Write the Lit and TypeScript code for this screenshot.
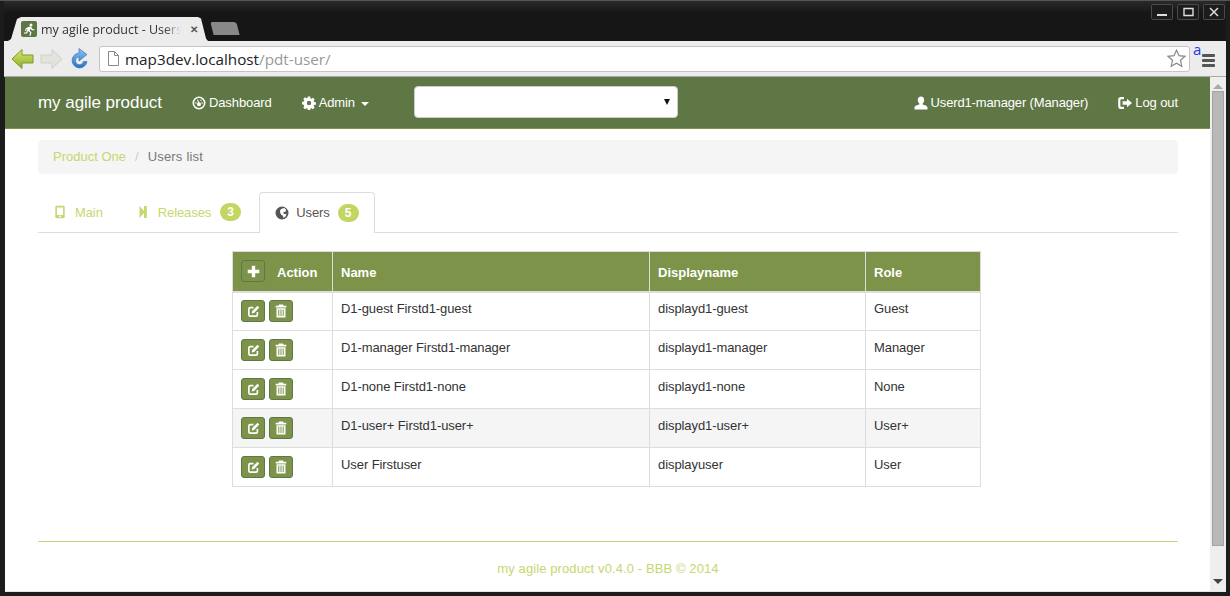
import { LitElement, html, css, svg } from "lit";
import { customElement } from "lit/decorators.js";

const users = [
  { name: "D1-guest Firstd1-guest", display: "displayd1-guest", role: "Guest" },
  { name: "D1-manager Firstd1-manager", display: "displayd1-manager", role: "Manager" },
  { name: "D1-none Firstd1-none", display: "displayd1-none", role: "None" },
  { name: "D1-user+ Firstd1-user+", display: "displayd1-user+", role: "User+" },
  { name: "User Firstuser", display: "displayuser", role: "User" },
];

// small glyph helper, every icon lives in a 14x14 box
const icon = (body: unknown, size = 14) => html`<svg
  class="ico"
  width=${size}
  height=${size}
  viewBox="0 0 14 14"
  fill="currentColor"
  >${body}</svg
>`;

const icDashboard = svg`<circle cx="7" cy="7" r="5.7" fill="none" stroke="currentColor" stroke-width="1.600"/><circle cx="7" cy="8.300" r="2"/><path d="M6.400 8 5 3.800l1-.3 1.600 4.200z"/><circle cx="3.900" cy="7" r=".8"/><circle cx="10.100" cy="7" r=".8"/><circle cx="9" cy="4.300" r=".7"/>`;
const icCog = svg`<path fill-rule="evenodd" d="M5.800.6h2.400l.3 1.800 1 .4 1.500-1 1.700 1.700-1 1.500.4 1 1.800.3v2.400l-1.800.3-.4 1 1 1.500-1.700 1.700-1.500-1-1 .4-.3 1.800H5.800l-.3-1.800-1-.4-1.500 1-1.700-1.700 1-1.500-.4-1L.1 8.200V5.800l1.800-.3.4-1-1-1.500L3 1.300l1.500 1 1-.4zM7 4.800a2.200 2.200 0 1 0 0 4.400 2.200 2.200 0 0 0 0-4.400z"/>`;
const icUser = svg`<path d="M7 .5c2 0 3.200 1.500 3.200 3.500 0 1.400-.6 2.700-1.500 3.400v1.100c1.900.5 4.800 1.200 4.800 3.200v1.800H.5v-1.800c0-2 2.900-2.700 4.800-3.200V7.400C4.400 6.700 3.800 5.400 3.800 4 3.800 2 5 .5 7 .5z"/>`;
const icLogout = svg`<path d="M6 1H3A2.800 2.800 0 0 0 .2 3.800v6.400A2.800 2.800 0 0 0 3 13h3v-2.200H3.200a.8.800 0 0 1-.8-.8V4c0-.4.400-.8.800-.8H6z"/><path d="M9 2.800 14 7l-5 4.200V8.800H4.600V5.200H9z"/>`;
const icPhone = svg`<path fill-rule="evenodd" d="M3.500.8h7c.7 0 1.200.5 1.200 1.200v10c0 .7-.5 1.200-1.200 1.200h-7c-.7 0-1.200-.5-1.200-1.200V2c0-.7.5-1.200 1.200-1.200zm.4 1.600V10h6.200V2.400zM7 10.600a.9.900 0 1 0 0 1.800.9.900 0 0 0 0-1.800z"/>`;
const icStepFwd = svg`<path d="M3.500 1v12l4.500-5v5h2.800V1H8v5z"/>`;
const icGlobe = svg`<path fill-rule="evenodd" d="M7 .5a6.500 6.500 0 1 0 0 13 6.500 6.500 0 0 0 0-13zM6.500 2.800 9.200 2l1.800 1.500-.4 2.200-1.900.2-.5 1.300 1.900 1 1.500-.5-.9 2.600-2.100 1.700-.7-2.300-1.600-1-1.100-1.900L5 4.500z"/>`;
const icPlus = svg`<path d="M5.200.8h3.600v4.400h4.400v3.600H8.800v4.400H5.200V8.800H.8V5.200h4.400z"/>`;
const icEdit = svg`<path d="M7 2.800H3.500a1.500 1.500 0 0 0-1.500 1.500v6.200A1.500 1.500 0 0 0 3.500 12h6.200a1.500 1.500 0 0 0 1.500-1.500V7.500" fill="none" stroke="currentColor" stroke-width="1.800"/><path d="M11.300.9 13.200 2.800 7.700 8.500 5 9.100l.6-2.700z"/>`;
const icTrash = svg`<path fill-rule="evenodd" d="M5 .6h4l.6 1.200h2.700v1.600H1.700V1.800h2.700zM2.500 4.200h9v9.200h-9zM4.300 5.500v6.600h1V5.500zm2.200 0v6.600h1V5.500zm2.200 0v6.600h1V5.500z"/>`;

@customElement("app-root")
export class AppRoot extends LitElement {
  static override styles = css`
    :host {
      display: block;
      width: 1230px;
      height: 596px;
      overflow: hidden;
      background: #1a1a1a;
      font-family: "Liberation Sans", Arial, sans-serif;
      font-size: 13px;
      color: #333;
    }
    .frame {
      display: flex;
      flex-direction: column;
      height: 596px;
      box-sizing: border-box;
      padding: 0 4px 4px 4px;
      background: #1c1c1c;
      border-top: 1px solid #555;
    }

    /* title strip */
    .strip {
      height: 40px;
      flex: none;
      display: flex;
      align-items: flex-end;
      background: linear-gradient(#2a2a2a, #161616 12px);
      position: relative;
    }
    .tab {
      width: 200px;
      height: 24px;
      margin-left: 4px;
      box-sizing: border-box;
      background: #ececec;
      clip-path: polygon(0 100%, 3px 92%, 9px 8%, 13px 0, 190px 0, 193px 6%, 198px 90%, 200px 100%);
      display: flex;
      align-items: center;
      padding: 0 0 0 13px;
      gap: 4px;
      font-family: "Open Sans", sans-serif;
      font-size: 12.5px;
      color: #333;
      overflow: hidden;
    }
    .favicon {
      width: 16px;
      height: 16px;
      flex: none;
      background: #5f7745;
      border-radius: 2px;
      color: #fff;
      display: flex;
      align-items: center;
      justify-content: center;
    }
    .tab-title {
      width: 140px;
      flex: none;
      white-space: nowrap;
      overflow: hidden;
      mask-image: linear-gradient(to right, #000 88%, transparent);
    }
    .tab-x {
      font-size: 10px;
      font-weight: 700;
      color: #555;
      margin-left: 5px;
    }
    .new-tab {
      width: 26px;
      height: 13px;
      margin: 0 0 6px 4px;
      background: #888;
      border-radius: 2px 3px 0 0;
      transform: skewX(14deg);
    }
    .win-btns {
      position: absolute;
      right: 1px;
      top: 3px;
      display: flex;
      gap: 4px;
    }
    .win-btn {
      width: 22px;
      height: 16px;
      box-sizing: border-box;
      border: 1px solid #4a4a4a;
      border-radius: 2px;
      background: #1c1c1c;
      color: #ddd;
      display: flex;
      align-items: center;
      justify-content: center;
    }

    /* toolbar */
    .toolbar {
      height: 36px;
      flex: none;
      box-sizing: border-box;
      background: #ececec;
      border-bottom: 1px solid #aaa;
      display: flex;
      align-items: center;
      padding: 0 0 0 7px;
      position: relative;
    }
    .nav-ico {
      display: flex;
      align-items: center;
    }
    .nav-ico .fwd {
      margin-left: 5px;
    }
    .nav-ico .reload {
      margin-left: 5px;
    }
    .omni {
      margin-left: 9px;
      width: 1091px;
      height: 26px;
      box-sizing: border-box;
      background: #fff;
      border: 1px solid #c4c4c4;
      border-radius: 3px;
      display: flex;
      align-items: center;
      padding: 0 3px 0 7px;
      font-family: "Open Sans", sans-serif;
      font-size: 15.25px;
      color: #222;
    }
    .omni .doc {
      margin-right: 5px;
      display: flex;
    }
    .omni .dim {
      color: #999;
    }
    .omni .star {
      margin-left: auto;
      display: flex;
    }
    .ext {
      position: absolute;
      left: 1189px;
      top: 0;
      color: #1a3cf0;
      font-family: "Open Sans", sans-serif;
      font-size: 15px;
      line-height: 16px;
    }
    .menu {
      width: 13px;
      margin-left: 12px;
      margin-top: 4px;
      display: flex;
      flex-direction: column;
      gap: 2px;
    }
    .menu i {
      display: block;
      height: 3px;
      background: #555;
      border-radius: 1px;
    }

    /* page plus scrollbar */
    .view {
      flex: 1;
      min-height: 0;
      display: flex;
      margin-left: 1px;
      border-bottom: 1px solid #e4e4e4;
    }
    .page {
      flex: 1;
      min-width: 0;
      background: #fff;
    }
    .scroll {
      width: 16px;
      flex: none;
      background: #eee;
      display: flex;
      flex-direction: column;
      align-items: center;
    }
    .scroll .up,
    .scroll .down {
      width: 0;
      height: 0;
      border-left: 5px solid transparent;
      border-right: 5px solid transparent;
    }
    .scroll .up {
      margin-top: 7px;
      border-bottom: 5px solid #aaa;
    }
    .scroll .thumb {
      width: 10px;
      height: 453px;
      margin-top: 2px;
      background: #b8b8b8;
      border: 1px solid #a4a4a4;
    }
    .scroll .down {
      margin-top: auto;
      margin-bottom: 7px;
      border-top: 5px solid #444;
    }

    .navbar {
      height: 52px;
      box-sizing: border-box;
      background: #5f7745;
      border-bottom: 1px solid #7d9349;
      color: #fff;
      display: flex;
      align-items: center;
      padding: 0 32px 0 33px;
      letter-spacing: -0.1px;
    }
    .brand {
      font-size: 17px;
      margin-right: 30px;
      letter-spacing: -0.05px;
    }
    .nav-link {
      display: flex;
      align-items: center;
      gap: 3px;
      margin-right: 30px;
    }
    .nav-link.who {
      letter-spacing: -0.14px;
    }
    .ico {
      flex: none;
      display: block;
    }
    .caret {
      width: 0;
      height: 0;
      margin-left: 3px;
      margin-top: 2px;
      border-left: 4px solid transparent;
      border-right: 4px solid transparent;
      border-top: 4px solid #fff;
    }
    .picker {
      width: 264px;
      height: 32px;
      box-sizing: border-box;
      margin: 0 0 2px 15px;
      background: #fff;
      border: 1px solid #ccc;
      border-radius: 4px;
      display: flex;
      align-items: center;
      justify-content: flex-end;
      padding-right: 7px;
    }
    .picker::after {
      content: "";
      border-left: 3px solid transparent;
      border-right: 3px solid transparent;
      border-top: 6px solid #111;
    }
    .spacer {
      flex: 1;
    }
    .nav-link.last {
      margin-right: 0;
    }

    .content {
      padding: 11px 32px 0 33px;
    }
    .crumbs {
      height: 34px;
      box-sizing: border-box;
      background: #f5f5f5;
      border-radius: 4px;
      padding: 0 15px 2px;
      display: flex;
      align-items: center;
      color: #777;
    }
    .crumbs .lnk {
      color: #c4d870;
    }
    .crumbs .sep {
      color: #ccc;
      margin: 0 9px;
    }
    .crumbs .cur {
      letter-spacing: 0.2px;
    }
    .tabs {
      display: flex;
      height: 41px;
      margin-top: 18px;
      border-bottom: 1px solid #ddd;
      box-sizing: border-box;
    }
    .tabs .t {
      display: flex;
      align-items: center;
      gap: 6px;
      padding: 0 15px;
      color: #c4d870;
      height: 40px;
      box-sizing: border-box;
      margin-right: 3px;
      letter-spacing: -0.1px;
    }
    .tabs .t.active {
      height: 41px;
      padding-bottom: 1px;
      color: #555;
      background: #fff;
      border: 1px solid #ddd;
      border-bottom: none;
      border-radius: 4px 4px 0 0;
    }
    .tabs .t .label {
      margin-left: 2px;
    }
    .tabs .t.active .label {
      margin-left: 1px;
    }
    .badge {
      min-width: 7px;
      padding: 3px 7px;
      border-radius: 10px;
      background: #c2d761;
      color: #fff;
      font-size: 12px;
      font-weight: 700;
      line-height: 12px;
      margin-left: 3px;
      letter-spacing: 0;
    }
    .tabs .t.active .badge {
      margin-left: 2px;
    }
    .tabs .t .ico {
      color: #c4d870;
    }
    .tabs .t.active .ico {
      color: #555;
    }

    table {
      width: 749px;
      margin: 18px 0 0 194px;
      border-collapse: collapse;
      table-layout: fixed;
      letter-spacing: -0.08px;
    }
    th,
    td {
      border: 1px solid #ddd;
      padding: 0 8px;
      text-align: left;
      vertical-align: middle;
    }
    thead th {
      background: #7d9349;
      color: #fff;
      font-weight: 700;
      height: 40px;
      padding-top: 2px;
      box-sizing: border-box;
      border-bottom-width: 2px;
      letter-spacing: 0;
    }
    tbody td {
      height: 39px;
      box-sizing: border-box;
      padding-bottom: 5px;
    }
    tbody tr:nth-child(4) td {
      background: #f5f5f5;
    }
    .act {
      display: flex;
      align-items: center;
      gap: 4px;
      margin-top: 5px;
    }
    .btn {
      width: 24px;
      height: 22px;
      box-sizing: border-box;
      border: 1px solid #5f7745;
      border-radius: 3px;
      background: #7d9349;
      color: #fff;
      display: flex;
      align-items: center;
      justify-content: center;
    }
    .head-act {
      display: flex;
      align-items: center;
      gap: 12px;
    }
    .head-act .btn {
      margin-top: -2px;
    }

    .foot {
      margin-top: 54px;
      border-top: 1px solid #c8d67e;
      padding-top: 19px;
      text-align: center;
      color: #c4d870;
      letter-spacing: 0.1px;
    }
  `;

  private chrome() {
    return html`
      <div class="strip">
        <div class="tab">
          <span class="favicon">
            <svg width="12" height="13" viewBox="0 0 12 13" fill="#fff">
              <circle cx="8" cy="2" r="1.5" />
              <path d="M5 4l3-.5 1.500 2.500 2 .5-.3 1-2.700-.6-1-1.200-.8 2 1.800 1.500L7.500 13l-1-.2.600-3.200L5 8l-1 2.500H1V9.500h2.200L4.500 6l-1 .5L3 8l-1-.3.700-2.200z" />
            </svg>
          </span>
          <span class="tab-title">my agile product - Users</span>
          <span class="tab-x">✕</span>
        </div>
        <div class="new-tab"></div>
        <div class="win-btns">
          <span class="win-btn">
            <svg width="10" height="10" viewBox="0 0 10 10"><path d="M0 7h10v2H0z" fill="#ddd" /></svg>
          </span>
          <span class="win-btn">
            <svg width="11" height="10" viewBox="0 0 11 10"><path d="M1 1.500h9v7H1z" fill="none" stroke="#ddd" stroke-width="1.4" /></svg>
          </span>
          <span class="win-btn">
            <svg width="10" height="10" viewBox="0 0 10 10"><path d="M1 1l8 8M9 1l-8 8" stroke="#ddd" stroke-width="1.5" /></svg>
          </span>
        </div>
      </div>
      <div class="toolbar">
        <span class="nav-ico">
          <svg width="24" height="22" viewBox="0 0 24 22">
            <defs>
              <linearGradient id="bk" x1="0" y1="0" x2="0" y2="1">
                <stop offset="0" stop-color="#dbe86a" />
                <stop offset="1" stop-color="#8cab2c" />
              </linearGradient>
              <linearGradient id="rl" x1="0" y1="0" x2="0" y2="1">
                <stop offset="0" stop-color="#8cc4f0" />
                <stop offset="1" stop-color="#2a72c4" />
              </linearGradient>
            </defs>
            <path d="M1 11 11 1.500V7h11v8H11v5.500z" fill="url(#bk)" stroke="#7c9a2a" />
          </svg>
          <svg class="fwd" width="23" height="22" viewBox="0 0 23 22">
            <path d="M22 11 12 1.500V7H1v8h11v5.500z" fill="#e3e3de" stroke="#d0d0cb" />
          </svg>
          <svg class="reload" width="22" height="22" viewBox="0 0 22 22">
            <path d="M11 5a7.500 7.500 0 1 0 8 8.500h-3.600A4 4 0 1 1 11 8.800V13l8-6.500L11 .5z" fill="url(#rl)" stroke="#2a6cb4" stroke-width=".6" />
          </svg>
        </span>
        <div class="omni">
          <span class="doc">
            <svg width="13" height="15" viewBox="0 0 13 15" fill="none" stroke="#888">
              <path d="M1.500.5h6l4 4v10h-10zM7.500.5v4h4" />
            </svg>
          </span>
          <span>map3dev.localhost<span class="dim">/pdt-user/</span></span>
          <span class="star">
            <svg width="19" height="19" viewBox="0 0 19 19" fill="#fff" stroke="#888" stroke-width="1.2">
              <path d="M9.500 1.200l2.500 5.500 6 .6-4.500 4 1.300 5.900-5.300-3-5.300 3 1.300-5.900-4.500-4 6-.6z" />
            </svg>
          </span>
        </div>
        <span class="ext">a</span>
        <span class="menu"><i></i><i></i><i></i></span>
      </div>
    `;
  }

  override render() {
    return html`
      <div class="frame">
        ${this.chrome()}
        <div class="view">
          <div class="page">
            <div class="navbar">
              <span class="brand">my agile product</span>
              <span class="nav-link">${icon(icDashboard)}Dashboard</span>
              <span class="nav-link">${icon(icCog)}Admin<span class="caret"></span></span>
              <span class="picker"></span>
              <span class="spacer"></span>
              <span class="nav-link who">${icon(icUser)}Userd1-manager (Manager)</span>
              <span class="nav-link last">${icon(icLogout)}Log out</span>
            </div>
            <div class="content">
              <div class="crumbs">
                <span class="lnk">Product One</span><span class="sep">/</span><span class="cur">Users list</span>
              </div>
              <div class="tabs">
                <span class="t">${icon(icPhone)}<span class="label">Main</span></span>
                <span class="t">${icon(icStepFwd)}<span class="label">Releases</span><span class="badge">3</span></span>
                <span class="t active">${icon(icGlobe)}<span class="label">Users</span><span class="badge">5</span></span>
              </div>
              <table>
                <colgroup>
                  <col style="width:100px" />
                  <col style="width:317px" />
                  <col style="width:216px" />
                  <col style="width:115px" />
                </colgroup>
                <thead>
                  <tr>
                    <th>
                      <span class="head-act"><span class="btn">${icon(icPlus, 13)}</span>Action</span>
                    </th>
                    <th>Name</th>
                    <th>Displayname</th>
                    <th>Role</th>
                  </tr>
                </thead>
                <tbody>
                  ${users.map(
                    (u) => html`<tr>
                      <td>
                        <div class="act">
                          <span class="btn">${icon(icEdit, 13)}</span>
                          <span class="btn">${icon(icTrash, 14)}</span>
                        </div>
                      </td>
                      <td>${u.name}</td>
                      <td>${u.display}</td>
                      <td>${u.role}</td>
                    </tr>`
                  )}
                </tbody>
              </table>
              <div class="foot">my agile product v0.4.0 - BBB © 2014</div>
            </div>
          </div>
          <div class="scroll">
            <span class="up"></span>
            <span class="thumb"></span>
            <span class="down"></span>
          </div>
        </div>
      </div>
    `;
  }
}
